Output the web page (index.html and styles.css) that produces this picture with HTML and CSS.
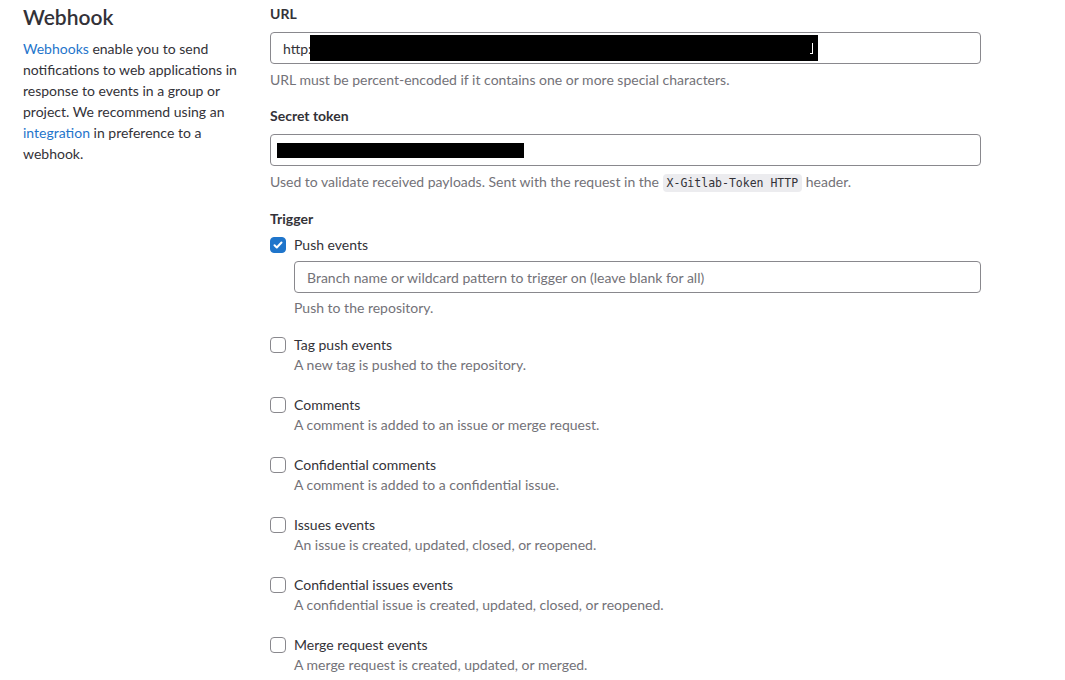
FILE: index.html
```html
<!DOCTYPE html>
<html>
<head>
<meta charset="utf-8">
<link rel="stylesheet" href="styles.css">
</head>
<body>
<div class="page">
  <div class="side">
    <h2 class="title">Webhook</h2>
    <p class="intro"><a href="#">Webhooks</a> enable you to send notifications to web applications in response to events in a group or project. We recommend using an <a href="#">integration</a> in preference to a webhook.</p>
  </div>
  <div class="main">
    <div class="group">
      <label class="label">URL</label>
      <div class="input"><span class="val">http:</span><span class="redact r-url"><span class="caret"></span></span></div>
      <div class="help">URL must be percent-encoded if it contains one or more special characters.</div>
    </div>
    <div class="group">
      <label class="label">Secret token</label>
      <div class="input"><span class="redact r-token"></span></div>
      <div class="help">Used to validate received payloads. Sent with the request in the <code class="code">X-Gitlab-Token HTTP</code> header.</div>
    </div>
    <div class="group trigger">
      <label class="label">Trigger</label>
      <div class="check first">
        <span class="box checked"><svg viewBox="0 0 16 16" width="16" height="16"><path d="M4.5 8.2l2.3 2.3 4.7-5" fill="none" stroke="#fff" stroke-width="2" stroke-linecap="round" stroke-linejoin="round"/></svg></span>
        <div class="cbody">
          <div class="clabel">Push events</div>
          <div class="input branch"><span class="ph">Branch name or wildcard pattern to trigger on (leave blank for all)</span></div>
          <div class="help branch-help">Push to the repository.</div>
        </div>
      </div>
      <div class="check">
        <span class="box"></span>
        <div class="cbody">
          <div class="clabel">Tag push events</div>
          <div class="cdesc">A new tag is pushed to the repository.</div>
        </div>
      </div>
      <div class="check">
        <span class="box"></span>
        <div class="cbody">
          <div class="clabel">Comments</div>
          <div class="cdesc">A comment is added to an issue or merge request.</div>
        </div>
      </div>
      <div class="check">
        <span class="box"></span>
        <div class="cbody">
          <div class="clabel">Confidential comments</div>
          <div class="cdesc">A comment is added to a confidential issue.</div>
        </div>
      </div>
      <div class="check">
        <span class="box"></span>
        <div class="cbody">
          <div class="clabel">Issues events</div>
          <div class="cdesc">An issue is created, updated, closed, or reopened.</div>
        </div>
      </div>
      <div class="check">
        <span class="box"></span>
        <div class="cbody">
          <div class="clabel">Confidential issues events</div>
          <div class="cdesc">A confidential issue is created, updated, closed, or reopened.</div>
        </div>
      </div>
      <div class="check">
        <span class="box"></span>
        <div class="cbody">
          <div class="clabel">Merge request events</div>
          <div class="cdesc">A merge request is created, updated, or merged.</div>
        </div>
      </div>
    </div>
  </div>
</div>
</body>
</html>
```
FILE: styles.css
```css
* { box-sizing: border-box; }
html, body { margin: 0; padding: 0; background: #fff; }
body {
  font-family: "Lato", "Noto Sans", sans-serif;
  font-size: 14px;
  color: #333238;
  overflow: hidden;
}
.page {
  display: grid;
  grid-template-columns: 224px 711px;
  column-gap: 23px;
  padding: 0 0 0 23px;
}
.title {
  margin: 3px 0 0;
  font-size: 21px;
  font-weight: 600;
  line-height: 27px;
  color: #333238;
}
.intro {
  margin: 8px 0 0;
  line-height: 21px;
}
.intro a { color: #1f75cb; text-decoration: none; }
.main { padding-top: 4px; }
.group { margin-bottom: 16px; }
.label {
  display: block;
  font-weight: 700;
  line-height: 20px;
  margin-bottom: 8px;
}
.input {
  height: 32px;
  border: 1px solid #89888d;
  border-radius: 4px;
  display: flex;
  align-items: center;
  padding: 0 12px;
  background: #fff;
}
.val { color: #333238; }
.redact { display: inline-block; background: #000; position: relative; }
.r-url { width: 508px; height: 26px; margin-left: -2px; }
.r-token { width: 247px; height: 15px; margin-left: -6px; }
.caret {
  position: absolute;
  right: 5px;
  top: 8px;
  width: 3px;
  height: 11px;
  border-right: 1px solid #fff;
  border-bottom: 1px solid #fff;
}
.help {
  margin-top: 6px;
  color: #737278;
  line-height: 20px;
}
.branch-help { margin-top: 5px; }
.code {
  font-family: "DejaVu Sans Mono", "Liberation Mono", monospace;
  font-size: 11.5px;
  background: #ececef;
  color: #333238;
  padding: 2px 4px;
  border-radius: 4px;
}
.trigger .label { margin-bottom: 6px; }
.check {
  display: flex;
  align-items: flex-start;
  gap: 8px;
  margin-bottom: 20px;
}
.check.first { margin-bottom: 17px; }
.box {
  flex: none;
  width: 16px;
  height: 16px;
  margin-top: 2px;
  border: 1px solid #89888d;
  border-radius: 4px;
  background: #fff;
}
.box.checked { background: #1f75cb; border-color: #1f75cb; display: flex; }
.box.checked svg { margin: -1px; }
.cbody { flex: 1; }
.clabel { line-height: 20px; }
.branch { margin-top: 6px; }
.ph { color: #737278; }
.cdesc { color: #737278; line-height: 20px; }
```
